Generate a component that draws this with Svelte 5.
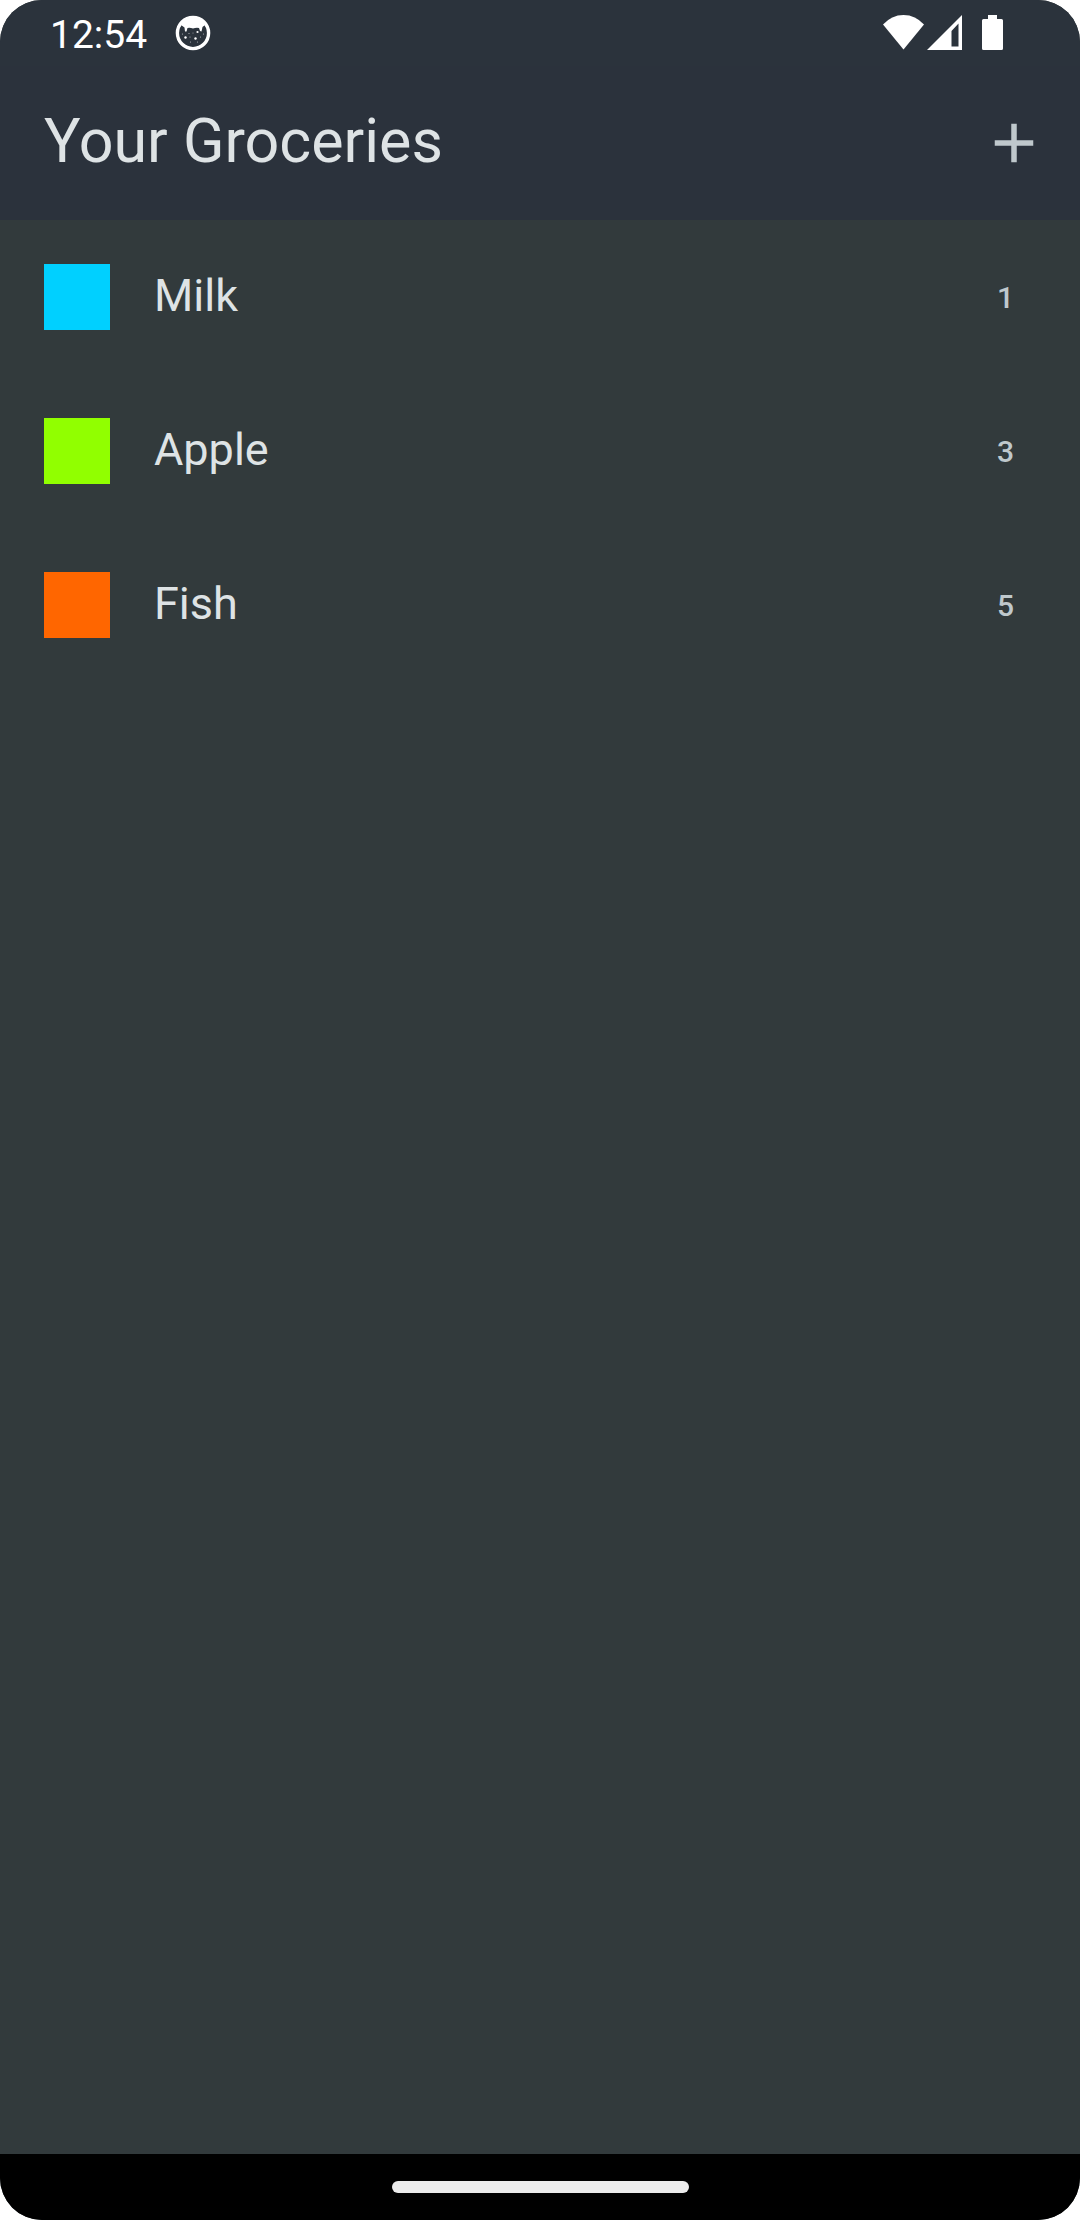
<script>
  const groceries = [
    { name: 'Milk', quantity: 1, color: '#00d0ff' },
    { name: 'Apple', quantity: 3, color: '#91ff00' },
    { name: 'Fish', quantity: 5, color: '#ff6600' },
  ];
</script>

<div class="screen">
  <div class="status">
    <time>12:54</time>
    <svg class="cat" viewBox="0 0 36 36" width="36" height="36" aria-hidden="true">
      <circle cx="18" cy="18" r="15.6" fill="none" stroke="#fff" stroke-width="3.4" />
      <path d="M6 10Q10 2 18 2T30 10L27.500 12L26.500 16.500L25 16L24 13Q21 12.500 18 13.500Q15 12.500 12.500 13L11.500 16.500L10 16.500L9.500 12.500Z" fill="#fff" />
      <g fill="#fff">
        <circle cx="22.500" cy="17" r="1.1" />
        <circle cx="10.500" cy="22.500" r="1.2" />
        <circle cx="20.500" cy="23.500" r="1.2" />
        <g opacity=".65">
          <circle cx="15" cy="22" r=".6" />
          <circle cx="25.500" cy="22" r=".6" />
          <circle cx="15.500" cy="27" r=".6" />
          <circle cx="14" cy="18.500" r=".6" />
          <circle cx="22.500" cy="27" r=".6" />
          <circle cx="7.500" cy="19" r=".6" />
          <circle cx="28.500" cy="19" r=".6" />
          <circle cx="18" cy="18" r=".5" />
        </g>
      </g>
    </svg>
    <div class="system">
      <svg viewBox="0 0 42 36" width="42" height="36" aria-hidden="true">
        <path d="M1 9.600Q9.500 0 21.500 0T42 9.600L21.500 34.500Z" fill="#fff" />
      </svg>
      <svg viewBox="0 0 36 36" width="36" height="36" aria-hidden="true">
        <path fill-rule="evenodd" d="M36 0V35H1ZM32.500 8.500L25.500 16V31.500H32.500Z" fill="#fff" />
      </svg>
      <svg class="battery" viewBox="0 0 22 36" width="22" height="36" aria-hidden="true">
        <path d="M6 0H15V4H19.500Q21 4 21 5.500V33.500Q21 35 19.500 35H1.500Q0 35 0 33.500V5.500Q0 4 1.500 4H6Z" fill="#fff" />
      </svg>
    </div>
  </div>

  <header>
    <h1>Your Groceries</h1>
    <button type="button" aria-label="Add item">
      <svg viewBox="0 0 24 24" width="66" height="66" aria-hidden="true">
        <path d="M19 13h-6v6h-2v-6H5v-2h6V5h2v6h6z" fill="currentColor" />
      </svg>
    </button>
  </header>

  <main>
    <ul>
      {#each groceries as item}
        <li>
          <span class="swatch" style:background-color={item.color}></span>
          <span class="name">{item.name}</span>
          <span class="quantity">{item.quantity}</span>
        </li>
      {/each}
    </ul>
  </main>

  <footer><div class="handle"></div></footer>
</div>

<style>
  :global(body) {
    margin: 0;
    background: #fff;
  }

  .screen {
    display: flex;
    flex-direction: column;
    min-height: 100vh;
    border-radius: 42px;
    overflow: hidden;
    background: #323a3c;
    color: #dee3e5;
    font-family: Roboto, 'Liberation Sans', sans-serif;
  }

  .status {
    display: flex;
    align-items: center;
    height: 66px;
    padding: 0 76px 0 50px;
    box-sizing: border-box;
    background: #2b333c;
    color: #fff;
  }

  time {
    font-size: 39px;
    line-height: 48px;
    padding-top: 4px;
  }

  .cat {
    margin-left: 28px;
  }

  .system {
    display: flex;
    gap: 2px;
    margin-left: auto;
  }

  .battery {
    margin-left: 18px;
  }

  header {
    display: flex;
    align-items: center;
    justify-content: space-between;
    height: 154px;
    padding-left: 44px;
    background: #2b323c;
  }

  h1 {
    margin: 0;
    padding-bottom: 4px;
    font-size: 61px;
    line-height: 76px;
    font-weight: 400;
  }

  button {
    display: grid;
    place-items: center;
    width: 132px;
    height: 132px;
    padding: 0;
    border: 0;
    background: none;
    color: #bfc8cc;
    cursor: pointer;
  }

  main {
    flex: 1;
  }

  ul {
    margin: 0;
    padding: 0;
    list-style: none;
  }

  li {
    display: flex;
    align-items: center;
    gap: 44px;
    height: 154px;
    padding: 0 66px 0 44px;
  }

  .swatch {
    width: 66px;
    height: 66px;
  }

  .name {
    flex: 1;
    padding-bottom: 2px;
    font-size: 45px;
    line-height: 66px;
  }

  .quantity {
    padding-top: 2px;
    font-size: 30px;
    line-height: 44px;
    font-weight: 500;
    color: #bfc8cc;
  }

  footer {
    display: grid;
    place-items: center;
    height: 66px;
    background: #000;
  }

  .handle {
    width: 297px;
    height: 12px;
    border-radius: 6px;
    background: #ececec;
  }
</style>
